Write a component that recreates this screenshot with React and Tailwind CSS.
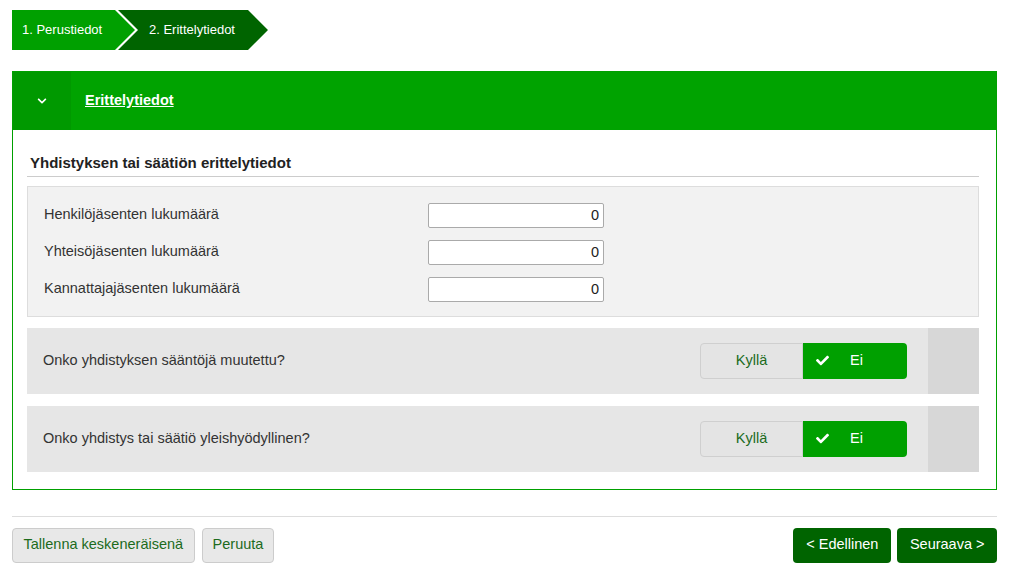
import React from 'react';
import { FaCheck, FaChevronDown } from 'react-icons/fa';

const fields = [
  'Henkilöjäsenten lukumäärä',
  'Yhteisöjäsenten lukumäärä',
  'Kannattajajäsenten lukumäärä',
];

const questions = [
  'Onko yhdistyksen sääntöjä muutettu?',
  'Onko yhdistys tai säätiö yleishyödyllinen?',
];

const Toggle = () => (
  <div className="flex h-9 w-[207px]">
    <button className="flex-1 rounded-l-[4px] border border-[#cfcfcf] bg-[#e4e4e4] text-[14.5px] text-[#1c6b1c]">
      Kyllä
    </button>
    <button className="flex w-[104px] items-center rounded-r-[4px] bg-[#00a000] pl-[13px] text-[14.5px] text-white">
      <FaCheck className="h-[13px] w-[13px]" />
      <span className="ml-[21px]">Ei</span>
    </button>
  </div>
);

export default function App() {
  return (
    <div className="min-h-[583px] bg-white font-['Liberation_Sans',Arial,sans-serif] text-[14.5px] text-[#333]">
      {/* Steps */}
      <div className="flex pl-3 pt-[10px]">
        <div className="flex h-10 w-[123px] items-center bg-[#00a000] pl-[10px] text-[13px] text-white [clip-path:polygon(0_0,calc(100%_-_20px)_0,100%_50%,calc(100%_-_20px)_100%,0_100%)]">
          1. Perustiedot
        </div>
        <div className="-ml-[17px] flex h-10 w-[150px] items-center bg-[#006400] pl-[31px] text-[13px] text-white [clip-path:polygon(0_0,calc(100%_-_20px)_0,100%_50%,calc(100%_-_20px)_100%,0_100%,20px_50%)]">
          2. Erittelytiedot
        </div>
      </div>

      {/* Panel */}
      <div className="ml-3 mt-[21px] w-[985px] border border-[#00a000]">
        <div className="flex h-[58px] items-center bg-[#00a300]">
          <div className="flex h-full w-[58px] items-center justify-center bg-[#009900] text-white">
            <FaChevronDown className="h-[10px] w-[10px]" />
          </div>
          <a href="#" className="ml-[14px] text-[14.5px] font-bold text-white underline">
            Erittelytiedot
          </a>
        </div>

        <div className="pb-[17px] pl-[14px] pr-[17px] pt-[22px]">
          <h3 className="ml-[3px] text-[15px] font-bold text-[#222]">
            Yhdistyksen tai säätiön erittelytiedot
          </h3>
          <div className="mt-[1px] border-t border-[#cccccc]" />

          <div className="mt-[9px] flex flex-col gap-[12px] border border-[#dddddd] bg-[#f2f2f2] px-4 pb-[14px] pt-[16px]">
            {fields.map((f) => (
              <div key={f} className="flex items-center">
                <span className="w-[384px] text-[14.5px]">{f}</span>
                <input
                  readOnly
                  value="0"
                  className="h-[25px] w-[176px] rounded-[2px] border border-[#aaaaaa] bg-white pr-[4px] text-right text-[14.5px] text-[#222]"
                />
              </div>
            ))}
          </div>

          {questions.map((q, i) => (
            <div
              key={q}
              className={`flex h-[66px] items-center bg-[#e6e6e6] ${i === 0 ? 'mt-[11px]' : 'mt-3'}`}
            >
              <span className="flex-1 pl-4 text-[14.5px]">{q}</span>
              <Toggle />
              <div className="ml-[21px] h-full w-[51px] bg-[#d7d7d7]" />
            </div>
          ))}
        </div>
      </div>

      {/* Footer */}
      <div className="ml-3 mt-[26px] w-[985px] border-t border-[#dddddd] pt-[11px]">
        <div className="flex items-center">
          <button className="h-[35px] rounded-[4px] border border-[#cccccc] bg-[#e8e8e8] px-[10.5px] text-[14.5px] text-[#1c6b1c]">
            Tallenna keskeneräisenä
          </button>
          <button className="ml-[7px] h-[35px] rounded-[4px] border border-[#cccccc] bg-[#e8e8e8] px-[10px] text-[14.5px] text-[#1c6b1c]">
            Peruuta
          </button>
          <div className="flex-1" />
          <button className="h-[35px] rounded-[4px] bg-[#006400] px-[13px] text-[14.5px] text-white">
            &lt; Edellinen
          </button>
          <button className="ml-[6px] h-[35px] rounded-[4px] bg-[#006400] px-[12.5px] text-[14.5px] text-white">
            Seuraava &gt;
          </button>
        </div>
      </div>
    </div>
  );
}
